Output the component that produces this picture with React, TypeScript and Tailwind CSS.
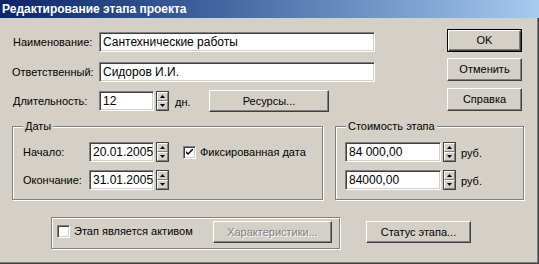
import React from "react";

const raised =
  "border border-t-white border-l-white border-r-[#404040] border-b-[#404040] shadow-[inset_-1px_-1px_0_#808080] bg-[#d4d0c8]";
const sunken =
  "border border-t-[#808080] border-l-[#808080] border-r-white border-b-white shadow-[inset_1px_1px_0_#404040,inset_-1px_-1px_0_#d4d0c8] bg-white";

const Field = ({ value, w }: { value: string; w: string }) => (
  <div className={`${sunken} ${w} h-[20px] flex items-center pl-[3px] text-[12px] text-black overflow-hidden whitespace-nowrap`}>
    {value}
  </div>
);

const Spin = () => (
  <div className="ml-[2px] w-[13px] h-[20px] flex flex-col border border-[#404040] bg-[#d4d0c8]">
    <div className="flex-1 flex items-center justify-center border-t border-l border-t-white border-l-white border-b border-r border-b-[#808080] border-r-[#808080]">
      <svg width="5" height="3" viewBox="0 0 5 3">
        <polygon points="2.5,0 5,3 0,3" fill="#000" />
      </svg>
    </div>
    <div className="flex-1 flex items-center justify-center border-t border-l border-t-white border-l-white border-b border-r border-b-[#808080] border-r-[#808080]">
      <svg width="5" height="3" viewBox="0 0 5 3">
        <polygon points="0,0 5,0 2.5,3" fill="#000" />
      </svg>
    </div>
  </div>
);

const Button = ({ label, w, h = "h-[23px]", disabled = false }: { label: string; w: string; h?: string; disabled?: boolean }) => (
  <div className={`${raised} ${w} ${h} flex items-center justify-center`}>
    <span className={disabled ? "text-[#808080] [text-shadow:1px_1px_0_#fff]" : "text-black"}>{label}</span>
  </div>
);

const Check = ({ checked }: { checked: boolean }) => (
  <div className={`${sunken} w-[13px] h-[13px] flex items-center justify-center`}>
    {checked && (
      <svg width="7" height="7" viewBox="0 0 7 7">
        <path d="M0 2 L0 4 L2 6 L7 1 L7 -1 L2 4 Z" fill="#000" />
      </svg>
    )}
  </div>
);

const Group = ({ title, className, children }: { title?: string; className: string; children: React.ReactNode }) => (
  <div className={`relative border border-[#808080] shadow-[inset_1px_1px_0_#fff,1px_1px_0_#fff] ${className}`}>
    {title && (
      <span className="absolute -top-[7px] left-[10px] px-[2px] bg-[#d4d0c8] leading-[13px]">{title}</span>
    )}
    {children}
  </div>
);

export default function App() {
  return (
    <div className="w-[539px] h-[264px] bg-[#d4d0c8] font-['Liberation_Sans',Arial,sans-serif] text-[11px] text-black overflow-hidden">
      {/* title bar */}
      <div className="h-[18px] bg-gradient-to-r from-[#0a246a] to-[#a6caf0] flex items-center pl-[2px]">
        <span className="text-white font-bold text-[12px] leading-[18px]">Редактирование этапа проекта</span>
      </div>

      <div className="h-[246px] border-r border-b border-[#404040]">
        <div className="h-full border-r border-b border-[#808080]">
          {/* top section */}
          <div className="h-[108px] flex">
            <div className="ml-[12px] mt-[14px]">
              <div className="flex items-center h-[20px]">
                <span className="w-[87px] pl-[1px]">Наименование:</span>
                <Field value="Сантехнические работы" w="w-[276px]" />
              </div>
              <div className="flex items-center h-[20px] mt-[10px]">
                <span className="w-[87px]">Ответственный:</span>
                <Field value="Сидоров И.И." w="w-[276px]" />
              </div>
              <div className="flex items-center h-[20px] mt-[9px]">
                <span className="w-[87px] pl-[1px]">Длительность:</span>
                <Field value="12" w="w-[55px]" />
                <Spin />
                <span className="w-[40px] pl-[6px] pt-[3px]">дн.</span>
                <Button label="Ресурсы..." w="w-[120px]" h="h-[22px]" />
              </div>
            </div>
            <div className="ml-[72px] mt-[11px] flex flex-col">
              <div className="border border-black">
                <Button label="OK" w="w-[73px]" h="h-[21px]" />
              </div>
              <div className="mt-[6px]">
                <Button label="Отменить" w="w-[75px]" />
              </div>
              <div className="mt-[7px]">
                <Button label="Справка" w="w-[75px]" />
              </div>
            </div>
          </div>

          {/* groups */}
          <div className="flex ml-[12px]">
            <Group title="Даты" className="w-[311px] h-[74px] pt-[15px] pl-[10px]">
              <div className="flex items-center h-[20px]">
                <span className="w-[66px]">Начало:</span>
                <Field value="20.01.2005" w="w-[65px]" />
                <Spin />
                <div className="ml-[14px]">
                  <Check checked />
                </div>
                <span className="ml-[4px]">Фиксированная дата</span>
              </div>
              <div className="flex items-center h-[20px] mt-[8px]">
                <span className="w-[66px]">Окончание:</span>
                <Field value="31.01.2005" w="w-[65px]" />
                <Spin />
              </div>
            </Group>
            <Group title="Стоимость этапа" className="ml-[12px] w-[189px] h-[74px] pt-[15px] pl-[9px]">
              <div className="flex items-center h-[20px]">
                <Field value="84 000,00" w="w-[96px]" />
                <Spin />
                <span className="ml-[5px] pt-[2px]">руб.</span>
              </div>
              <div className="flex items-center h-[20px] mt-[8px]">
                <Field value="84000,00" w="w-[96px]" />
                <Spin />
                <span className="ml-[5px] pt-[2px]">руб.</span>
              </div>
            </Group>
          </div>

          {/* bottom row */}
          <div className="flex ml-[51px] mt-[17px]">
            <Group className="w-[289px] h-[32px] flex items-start pl-[5px]">
              <div className="w-[156px] mt-[5px] flex items-center">
                <Check checked={false} />
                <span className="ml-[4px]">Этап является активом</span>
              </div>
              <div className="mt-[3px]">
                <Button label="Характеристики..." w="w-[119px]" h="h-[22px]" disabled />
              </div>
            </Group>
            <div className="ml-[26px] mt-[4px]">
              <Button label="Статус этапа..." w="w-[105px]" h="h-[22px]" />
            </div>
          </div>
        </div>
      </div>
    </div>
  );
}
